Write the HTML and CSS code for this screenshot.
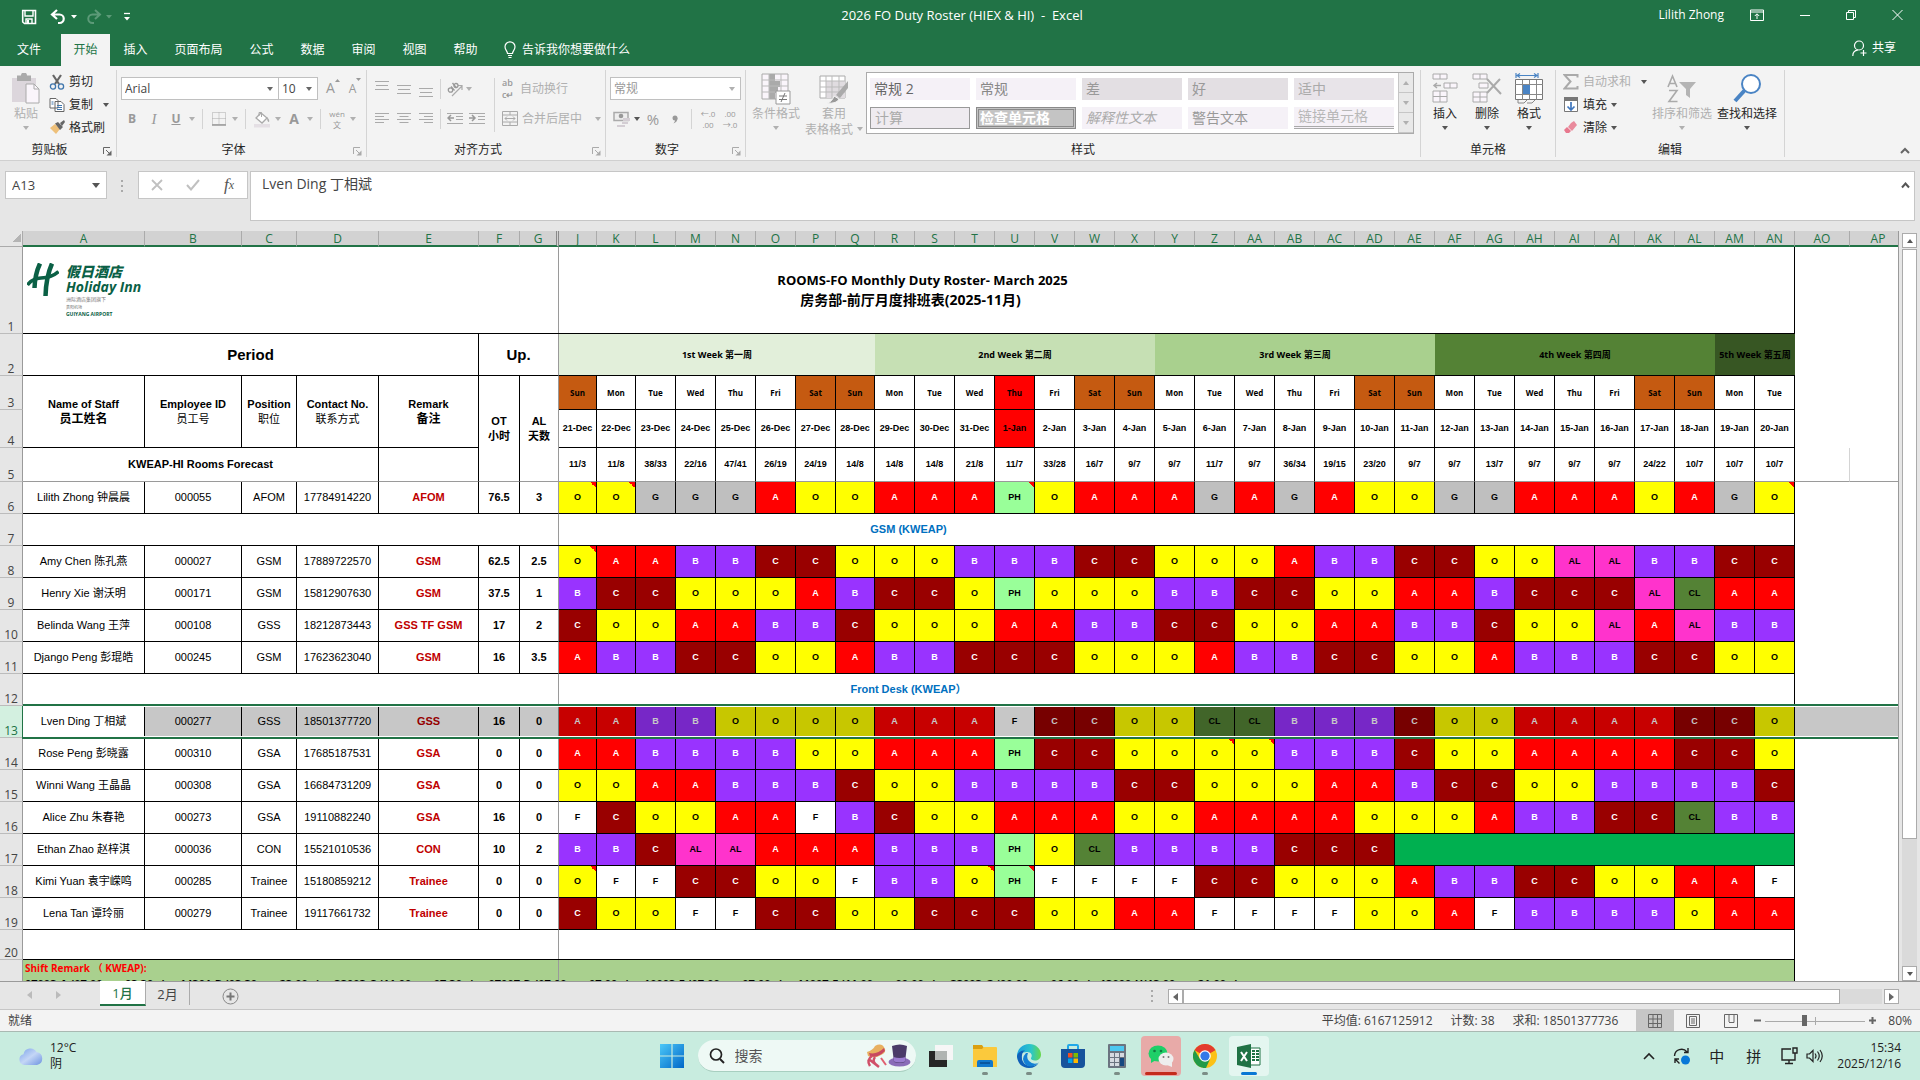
FILE: index.html
```html
<!DOCTYPE html>
<html lang="zh-CN">
<head>
<meta charset="utf-8">
<title>2026 FO Duty Roster (HIEX &amp; HI) - Excel</title>
<link rel="stylesheet" href="styles.css">
</head>
<body>
<header class="titlebar">
  <div class="quick">
    <button class="tb" aria-label="保存"><svg width="16" height="16" viewBox="0 0 16 16"><path d="M1.700 1.500H14.500V14.500H3.500L1.700 13z" fill="none" stroke="#fff" stroke-width="1.600"/><path d="M4 2v5h8V2M5 14v-4h6v4" fill="none" stroke="#fff" stroke-width="1.400"/><path d="M6 11h2v3H6z" fill="#fff"/></svg></button>
    <button class="tb" aria-label="撤消"><svg width="27" height="16" viewBox="0 0 27 16"><path d="M7 1L2 5.500 7 10M3 5.500h6.500a4 4 0 0 1 0 8.500H8" fill="none" stroke="#fff" stroke-width="2.200"/><path d="M21 6h6l-3 3.500z" fill="#fff"/></svg></button>
    <button class="tb" aria-label="恢复"><svg width="27" height="16" viewBox="0 0 27 16"><path d="M10 1l5 4.500L10 10M14 5.500H7.500a4 4 0 0 0 0 8.500H9" fill="none" stroke="#5c9a78" stroke-width="2"/><path d="M21 6h6l-3 3.500z" fill="#5c9a78"/></svg></button>
    <button class="tb" aria-label="自定义快速访问工具栏"><svg width="8" height="10" viewBox="0 0 8 10"><path d="M1 1.500h6" stroke="#fff" stroke-width="1.300"/><path d="M1 5h6L4 8.500z" fill="#fff"/></svg></button>
  </div>
  <h1 class="doc-title">2026 FO Duty Roster (HIEX &amp; HI)&nbsp; -&nbsp; Excel</h1>
  <div class="window-tools">
    <span>Lilith Zhong</span>
    <button class="tb" aria-label="功能区显示选项"><svg width="14" height="12" viewBox="0 0 14 12"><path d="M.5 1H13.500V11.500H.5zM.5 3H13.500M7 10V5M4.800 7L7 4.800 9.200 7" fill="none" stroke="#fff"/></svg></button>
    <button class="tb" aria-label="最小化"><svg width="10" height="12" viewBox="0 0 10 12"><path d="M0 6.500h10" stroke="#fff"/></svg></button>
    <button class="tb" aria-label="还原"><svg width="10" height="12" viewBox="0 0 10 12"><path d="M.5 3.500h7v7h-7zM2.500 3.500v-2h7v7h-2" fill="none" stroke="#fff"/></svg></button>
    <button class="tb" aria-label="关闭"><svg width="11" height="12" viewBox="0 0 11 12"><path d="M.5 1l10 10M10.500 1l-10 10" stroke="#fff"/></svg></button>
  </div>
</header>
<nav class="tabs">
  <button class="tab file">文件</button><button class="tab active">开始</button><button class="tab">插入</button><button class="tab wide">页面布局</button><button class="tab">公式</button><button class="tab">数据</button><button class="tab">审阅</button><button class="tab">视图</button><button class="tab">帮助</button>
  <button class="tell"><svg width="12" height="18" viewBox="0 0 12 18"><path d="M3.500 12.500C3.500 10 1 9 1 5.800a5 5 0 0 1 10 0C11 9 8.500 10 8.500 12.500zM4 14.500h4M4.500 16.500h3" fill="none" stroke="#fff" stroke-width="1.200"/></svg>告诉我你想要做什么</button>
  <button class="share"><svg width="16" height="17" viewBox="0 0 16 17"><circle cx="7" cy="5.500" r="4.500" fill="none" stroke="#fff" stroke-width="1.200"/><path d="M.8 16c0-3 2-5.500 5-5.800M11.500 10v6M8.500 13h6" fill="none" stroke="#fff" stroke-width="1.200"/></svg>共享</button>
</nav>

<section class="ribbon" aria-label="功能区">
  <div class="group clip">
    <div class="body">
      <button class="big off"><svg width="30" height="32" viewBox="0 0 30 32"><path d="M1 5h24v24H1z" fill="#dcd6dc"/><path d="M6 2.500h4a3 3 0 0 1 6 0h4V8H6z" fill="#aaa"/><path d="M15 11h8l5 5v14H15z" fill="#faf5fb" stroke="#aaa"/><path d="M23 11v5h5" fill="none" stroke="#aaa"/></svg><span>粘贴</span><i class="caret"></i></button>
      <div class="stack">
        <button class="line"><svg width="16" height="16" viewBox="0 0 16 16"><path d="M4 1l6 9M12 1L6 10" stroke="#666" stroke-width="2.200"/><circle cx="4" cy="12.500" r="2.600" fill="none" stroke="#3f76ad" stroke-width="1.300"/><circle cx="12" cy="12.500" r="2.600" fill="none" stroke="#3f76ad" stroke-width="1.300"/></svg>剪切</button>
        <button class="line"><svg width="16" height="16" viewBox="0 0 16 16"><path d="M1 1.500h6l2 2V11H1zM6 4.500h6l3 3v7H6z" fill="#fff" stroke="#666"/><path d="M2.500 5h2M2.500 7h2M8 8.500h5M8 10.500h5M8 12.500h5" stroke="#3f76ad"/></svg>复制<i class="caret dark gap"></i></button>
        <button class="line"><svg width="16" height="16" viewBox="0 0 16 16"><path d="M6 4l5 5-4 5-6-6z" fill="#eec07a"/><path d="M6 3.500L9 2l5 5-3 3zM11 3l4-3 1 2-3 4z" fill="#666"/></svg>格式刷</button>
      </div>
    </div>
    <div class="caption"><span>剪贴板</span><svg class="launch on" width="9" height="9" viewBox="0 0 9 9"><path d="M.5 7V.5H7M3 3l4 4" fill="none" stroke="#666"/><path d="M8.500 3.500v5h-5z" fill="#666"/></svg></div>
  </div>

  <div class="group font">
    <div class="body col">
      <div class="tools"><span class="select w-font"><select aria-label="字体"><option>Arial</option></select></span><span class="select w-size"><select aria-label="字号"><option>10</option></select></span>
        <button class="ic grow-a" aria-label="增大字号">A<svg width="5" height="4" viewBox="0 0 5 4"><path d="M0 4l2.500-3L5 4z" fill="#999"/></svg></button><button class="ic shrink-a" aria-label="减小字号">A<svg width="5" height="4" viewBox="0 0 5 4"><path d="M0 0l2.500 3L5 0z" fill="#999"/></svg></button></div>
      <div class="tools low">
        <button class="ic b">B</button><button class="ic i">I</button><button class="ic u">U</button><i class="caret"></i><i class="vr"></i>
        <button class="ic" aria-label="边框"><svg width="14" height="14" viewBox="0 0 14 14"><path d="M.5.5h13v12H.5zM7 .5v12M.5 6.500h13" fill="none" stroke="#aaa" stroke-dasharray="1 1"/><path d="M0 13h14" stroke="#999" stroke-width="1.500"/></svg></button><i class="caret"></i><i class="vr"></i>
        <button class="ic" aria-label="填充颜色"><svg width="16" height="17" viewBox="0 0 16 17"><path d="M7 2l6 5-5 5-6-5z" fill="#fff" stroke="#aaa" stroke-width="1.300"/><path d="M5 5V1.500h2.500V6" fill="none" stroke="#aaa"/><path d="M13 6q3 3 2 5-2 0-2-5z" fill="#aaa"/><path d="M0 13h16v3.500H0z" fill="#e4dfe4"/></svg></button><i class="caret"></i>
        <button class="ic a">A</button><i class="caret"></i><i class="vr"></i>
        <button class="ic wen"><span>wén</span><span>文</span></button><i class="caret"></i>
      </div>
    </div>
    <div class="caption"><span>字体</span><svg class="launch" width="9" height="9" viewBox="0 0 9 9"><path d="M.5 7V.5H7M3 3l4 4" fill="none" stroke="#aaa"/><path d="M8.500 3.500v5h-5z" fill="#aaa"/></svg></div>
  </div>

  <div class="group align">
    <div class="body">
      <div class="col">
        <div class="tools">
          <button class="ic" aria-label="顶端对齐"><svg width="14" height="16" viewBox="0 0 14 16"><path d="M0 .5h14M1 4.500h12M0 8.500h14" stroke="#aaa"/></svg></button>
          <button class="ic" aria-label="垂直居中"><svg width="14" height="16" viewBox="0 0 14 16"><path d="M0 4.500h14M1 8.500h12M0 12.500h14" stroke="#aaa"/></svg></button>
          <button class="ic" aria-label="底端对齐"><svg width="14" height="16" viewBox="0 0 14 16"><path d="M0 7.500h14M1 11.500h12M0 15.500h14" stroke="#aaa"/></svg></button><i class="vr"></i>
          <button class="ic orient" aria-label="方向"><svg width="17" height="16" viewBox="0 0 17 16"><path d="M5 15L15 5M15 9V4.500H11" fill="none" stroke="#aaa" stroke-width="1.200"/><circle cx="3.500" cy="9" r="2.200" fill="none" stroke="#999" stroke-width="1.300"/><path d="M4 5.500L7.500 9.500M5.500 2L9.500 7" stroke="#999" stroke-width="1.300"/><circle cx="9" cy="4.500" r="2" fill="none" stroke="#999" stroke-width="1.300"/></svg></button><i class="caret"></i>
        </div>
        <div class="tools low">
          <button class="ic" aria-label="左对齐"><svg width="14" height="14" viewBox="0 0 14 14"><path d="M0 1.500h14M0 4.500h9M0 7.500h14M0 10.500h9" stroke="#aaa"/></svg></button>
          <button class="ic" aria-label="居中"><svg width="14" height="14" viewBox="0 0 14 14"><path d="M0 1.500h14M2.500 4.500h9M0 7.500h14M2.500 10.500h9" stroke="#aaa"/></svg></button>
          <button class="ic" aria-label="右对齐"><svg width="14" height="14" viewBox="0 0 14 14"><path d="M0 1.500h14M5 4.500h9M0 7.500h14M5 10.500h9" stroke="#aaa"/></svg></button><i class="vr"></i>
          <button class="ic" aria-label="减少缩进量"><svg width="16" height="14" viewBox="0 0 16 14"><path d="M0 1.500h16M9 4.500h7M9 7.500h7M0 11.500h16" stroke="#aaa"/><path d="M7 6H1M4 3L1 6l3 3" fill="none" stroke="#999" stroke-width="1.500"/></svg></button>
          <button class="ic" aria-label="增加缩进量"><svg width="16" height="14" viewBox="0 0 16 14"><path d="M0 1.500h16M9 4.500h7M9 7.500h7M0 11.500h16" stroke="#aaa"/><path d="M0 6h6M3 3l3 3-3 3" fill="none" stroke="#999" stroke-width="1.500"/></svg></button>
        </div>
      </div>
      <i class="vr tall"></i>
      <div class="stack wraps">
        <button class="line off"><span class="abc"><span>ab</span><span>c↵</span></span>自动换行</button>
        <button class="line off"><svg width="16" height="16" viewBox="0 0 16 16"><path d="M.5.5h15v14H.5zM.5 4h15M.5 11h15M8 0v4M8 11v4M3 7.500h10M5 5.500l-2 2 2 2M11 5.500l2 2-2 2" fill="none" stroke="#aaa"/></svg>合并后居中<i class="caret gap"></i></button>
      </div>
    </div>
    <div class="caption"><span>对齐方式</span><svg class="launch" width="9" height="9" viewBox="0 0 9 9"><path d="M.5 7V.5H7M3 3l4 4" fill="none" stroke="#aaa"/><path d="M8.500 3.500v5h-5z" fill="#aaa"/></svg></div>
  </div>

  <div class="group number">
    <div class="body col">
      <div class="tools"><span class="select w-num"><select aria-label="数字格式"><option>常规</option></select></span></div>
      <div class="tools low">
        <button class="ic" aria-label="会计数字格式"><svg width="17" height="17" viewBox="0 0 17 17"><path d="M1 1.500h14v8H1z" fill="#eee" stroke="#aaa" stroke-width="1.500"/><circle cx="8" cy="5" r="2.300" fill="#999"/><path d="M10 7h7v3h-7zM9 11h6v2H9zM4 14h8v2H4z" fill="#d4ced4"/></svg></button><i class="caret dark"></i>
        <button class="ic pct">%</button><button class="ic comma" aria-label="千位分隔样式"><svg width="6" height="9" viewBox="0 0 6 9"><circle cx="3" cy="3" r="2.500" fill="#999"/><path d="M5.500 3q0 4-4 5.500 2-2.500 1.500-4z" fill="#999"/></svg></button><i class="vr"></i>
        <button class="ic dec"><span>←.0</span><span>.00</span></button><button class="ic dec"><span>.00</span><span>→.0</span></button>
      </div>
    </div>
    <div class="caption"><span>数字</span><svg class="launch" width="9" height="9" viewBox="0 0 9 9"><path d="M.5 7V.5H7M3 3l4 4" fill="none" stroke="#aaa"/><path d="M8.500 3.500v5h-5z" fill="#aaa"/></svg></div>
  </div>

  <div class="group styles">
    <div class="body">
      <button class="big off"><svg width="30" height="32" viewBox="0 0 30 32"><path d="M1 1h26v25H1z" fill="#faf5fb" stroke="#aaa"/><path d="M8 1h6v25H8zM14 8h5v6h-5zM14 14h3v6h-3z" fill="#aaa"/><path d="M1 7h26M1 13h26M1 19h26M8 1v25M20 1v25" stroke="#bbb"/><path d="M15 18h14v13H15z" fill="#fff" stroke="#999"/><path d="M18 23h8M18 26.500h8M24 20l-4 9" stroke="#777"/></svg><span>条件格式</span><i class="caret"></i></button>
      <button class="big off tbl"><svg width="30" height="32" viewBox="0 0 30 32"><path d="M1 3h25v22H1z" fill="#fff" stroke="#aaa"/><path d="M7 8h19v17H7z" fill="#e0dce0"/><path d="M1 8h25M1 14h25M1 19h25M7 3v22M13 3v22M20 3v22" stroke="#bbb"/><path d="M29 8v7l-8 10-4-3z" fill="#aaa"/><path d="M8 30q5-1 7-7l5 3q-2 5-12 4z" fill="#999" stroke="#f3f3f3"/></svg><span>套用</span><span>表格格式<i class="caret side"></i></span></button>
      <div class="gallery">
        <div class="swatches">
          <button class="sw">常规 2</button><button class="sw mid">常规</button><button class="sw bad">差</button><button class="sw bad">好</button><button class="sw neutral">适中</button>
          <button class="sw calc">计算</button><button class="sw check">检查单元格</button><button class="sw expl">解释性文本</button><button class="sw warn">警告文本</button><button class="sw link">链接单元格</button>
        </div>
        <div class="gscroll"><button aria-label="上一行"><i class="caret up"></i></button><button aria-label="下一行"><i class="caret"></i></button><button aria-label="其他"><i class="caret"></i></button></div>
      </div>
    </div>
    <div class="caption"><span>样式</span></div>
  </div>

  <div class="group cells">
    <div class="body">
      <button class="big"><svg width="30" height="32" viewBox="0 0 30 32"><path d="M3 1h14v5H3zM10 1v5M3 18h14v11H3zM10 18v11M3 23.500h14M14 10h13v5H14zM20 10v5" fill="#faf5fb" stroke="#aaa"/><path d="M11 12.500H4M7 10l-3 2.500L7 15" fill="none" stroke="#aaa" stroke-width="1.500"/></svg><span>插入</span><i class="caret dark"></i></button>
      <button class="big"><svg width="30" height="32" viewBox="0 0 30 32"><path d="M1 1h14v5H1zM8 1v5M7 10h9v5H7zM1 19h14v10H1zM8 19v10M1 24h14" fill="#faf5fb" stroke="#aaa"/><path d="M15 6l14 15M28 6L15 20" stroke="#aaa" stroke-width="2"/></svg><span>删除</span><i class="caret dark"></i></button>
      <button class="big"><svg width="30" height="32" viewBox="0 0 30 32"><path d="M2 0v5M24 0v5M3 2.500h20M6 .5l-3 2 3 2M20 .5l3 2-3 2" fill="none" stroke="#4a84c4" stroke-width="1.200"/><path d="M1.500 6.500h27v20h-27z" fill="#fff" stroke="#777"/><path d="M1 11.500h28M1 21.500h28M8.500 7v20M22.500 7v20M15.500 7v4M15.500 22v5M4 27v3h6l3-3M13 30h5l3-3" fill="none" stroke="#888"/><path d="M9 12h7v9H9z" fill="#4a84c4"/></svg><span>格式</span><i class="caret dark"></i></button>
    </div>
    <div class="caption"><span>单元格</span></div>
  </div>

  <div class="group edit">
    <div class="body">
      <div class="stack">
        <button class="line off"><svg width="16" height="16" viewBox="0 0 16 16"><path d="M14.500 3.500V1H1.500l6 6.500-6 7h13V12" fill="none" stroke="#aaa" stroke-width="2"/></svg>自动求和<i class="caret dark gap"></i></button>
        <button class="line"><svg width="16" height="16" viewBox="0 0 16 16"><path d="M1.500 1.500h13v13h-13z" fill="#fff" stroke="#777"/><path d="M1 0h14v4H1z" fill="#777"/><path d="M8 5v8M4.500 9.500L8 13l3.500-3.500" fill="none" stroke="#3f76bd" stroke-width="1.700"/></svg>填充<i class="caret dark"></i></button>
        <button class="line"><svg width="16" height="16" viewBox="0 0 16 16"><path d="M8 3l3-2 3 4-5 6-4-4z" fill="#e98a9c"/><path d="M4 7l4 4-2 2H3L1 10z" fill="#e8788e"/></svg>清除<i class="caret dark"></i></button>
      </div>
      <button class="big off sort"><svg width="30" height="32" viewBox="0 0 30 32"><path d="M1 14L5.500 3 10 14M2.800 10.500h5.400M2 17.500h8L2 28.500h8.500" fill="none" stroke="#aaa" stroke-width="1.600"/><path d="M12 9h17l-6 7v9l-4-3v-6z" fill="#b4b4b4"/></svg><span>排序和筛选</span><i class="caret"></i></button>
      <button class="big find"><svg width="30" height="32" viewBox="0 0 30 32"><circle cx="19" cy="11" r="9" fill="#fff" stroke="#4a84c4" stroke-width="2"/><path d="M12.500 17.500L3 28" stroke="#4a84c4" stroke-width="4"/></svg><span>查找和选择</span><i class="caret dark"></i></button>
    </div>
    <div class="caption"><span>编辑</span></div>
  </div>
  <div class="ribbon-end"><button class="collapse" aria-label="折叠功能区"><svg width="10" height="7" viewBox="0 0 10 7"><path d="M1 6l4-4 4 4" fill="none" stroke="#666" stroke-width="2"/></svg></button></div>
</section>

<section class="formula-row">
  <div class="namebox"><input value="A13" aria-label="名称框"><i class="caret dark"></i></div>
  <svg class="grip" width="3" height="12" viewBox="0 0 3 12"><path d="M0 0h2v2H0zM0 5h2v2H0zM0 10h2v2H0z" fill="#aaa"/></svg>
  <div class="fx">
    <button aria-label="取消"><svg width="12" height="12" viewBox="0 0 12 12"><path d="M1 1l10 10M11 1L1 11" stroke="#c0c0c0" stroke-width="1.800"/></svg></button>
    <button aria-label="输入"><svg width="14" height="12" viewBox="0 0 14 12"><path d="M1 6l4 4.500L13 1" fill="none" stroke="#c0c0c0" stroke-width="2"/></svg></button>
    <button class="fn"><em>f</em>x</button>
  </div>
  <div class="formula"><textarea aria-label="编辑栏">Lven Ding 丁相斌</textarea><svg width="9" height="7" viewBox="0 0 9 7"><path d="M1 5.500l3.500-4L8 5.500" fill="none" stroke="#555" stroke-width="2"/></svg></div>
</section>

<main class="workspace">
  <div class="sheet"><table class="grid" id="grid"></table></div>
  <div class="vscroll"><button aria-label="向上滚动"><i class="caret dark up"></i></button><div class="vthumb"></div><div class="vtrack"></div><button aria-label="向下滚动"><i class="caret dark"></i></button></div>
</main>

<section class="sheetbar">
  <div class="arrows"><svg width="5" height="8" viewBox="0 0 5 8"><path d="M5 0v8L0 4z" fill="#bbb"/></svg><svg width="5" height="8" viewBox="0 0 5 8"><path d="M0 0v8l5-4z" fill="#bbb"/></svg></div>
  <button class="stab current">1月</button><button class="stab">2月</button>
  <button class="addsheet" aria-label="新工作表"><svg width="17" height="17" viewBox="0 0 17 17"><circle cx="8.500" cy="8.500" r="7.500" fill="none" stroke="#888"/><path d="M8.500 4.500v8M4.500 8.500h8" stroke="#777" stroke-width="2"/></svg></button>
  <svg class="grip2" width="3" height="12" viewBox="0 0 3 12"><path d="M0 0h2v2H0zM0 5h2v2H0zM0 10h2v2H0z" fill="#aaa"/></svg>
  <div class="hscroll"><button aria-label="向左滚动"><svg width="5" height="8" viewBox="0 0 5 8"><path d="M5 0v8L0 4z" fill="#666"/></svg></button><div class="hthumb"></div><div class="htrack"></div><button aria-label="向右滚动"><svg width="5" height="8" viewBox="0 0 5 8"><path d="M0 0v8l5-4z" fill="#666"/></svg></button></div>
</section>

<section class="status">
  <span class="ready">就绪</span>
  <span>平均值: 6167125912</span><span>计数: 38</span><span>求和: 18501377736</span>
  <div class="views">
    <button class="on" aria-label="普通"><svg width="14" height="14" viewBox="0 0 14 14"><path d="M.5.500h13v13H.5zM5 0v14M9.500 0v14M0 5h14M0 9.500h14" fill="none" stroke="#666"/></svg></button>
    <button aria-label="页面布局"><svg width="14" height="14" viewBox="0 0 14 14"><path d="M.5.500h13v13H.5zM3.500 2.500h7v9h-7zM5 5h4M5 7h4M5 9h4" fill="none" stroke="#666"/></svg></button>
    <button aria-label="分页预览"><svg width="14" height="14" viewBox="0 0 14 14"><path d="M.5.500h13v13H.5zM5 0v8M5 8.500h5V0" fill="none" stroke="#666"/></svg></button>
  </div>
  <div class="zoomer"><button class="zoom-btn" aria-label="缩小"><svg width="7" height="7" viewBox="0 0 7 7"><path d="M0 3.500h7" stroke="#666" stroke-width="2"/></svg></button><input type="range" class="zoom" min="0" max="100" value="39" aria-label="缩放"><button class="zoom-btn" aria-label="放大"><svg width="7" height="7" viewBox="0 0 7 7"><path d="M0 3.500h7M3.500 0v7" stroke="#666" stroke-width="2"/></svg></button></div>
  <span class="pct80">80%</span>
</section>

<footer class="taskbar">
  <button class="weather"><svg width="24" height="18" viewBox="0 0 24 18"><defs><linearGradient id="cl" x1="0" y1="0" x2="1" y2="1"><stop offset="0" stop-color="#7ba3ea"/><stop offset=".5" stop-color="#c4d6f6"/><stop offset="1" stop-color="#6d93e0"/></linearGradient></defs><path d="M5.500 18a5.500 5.500 0 0 1-1-10.800A7 7 0 0 1 17.500 5 6.600 6.600 0 0 1 18 18z" fill="url(#cl)"/></svg><span class="wtext"><span>12°C</span><span>阴</span></span></button>
  <div class="apps">
    <button class="app start" aria-label="开始菜单"><svg width="24" height="24" viewBox="0 0 24 24"><defs><linearGradient id="wn" x1="0" y1="0" x2="1" y2="1"><stop offset="0" stop-color="#4cc8f8"/><stop offset="1" stop-color="#0067c8"/></linearGradient></defs><path d="M0 0h11.400v11.400H0zM12.600 0H24v11.400H12.600zM0 12.600h11.400V24H0zM12.600 12.600H24V24H12.600z" fill="url(#wn)"/></svg></button>
    <label class="search"><svg width="16" height="16" viewBox="0 0 16 16"><circle cx="7" cy="6.500" r="5.500" fill="none" stroke="#222" stroke-width="1.700"/><path d="M11 11l4 4" stroke="#222" stroke-width="1.900"/></svg><input placeholder="搜索" aria-label="搜索"><svg width="46" height="24" viewBox="0 0 46 24"><path d="M2 8Q8 6 10 2q7-4 10 3 1 4-4 6-6 4-13 1z" fill="#e8b060"/><path d="M4 9q8 2 15-5l1 3Q12 15 5 12z" fill="#c84860"/><path d="M7 12q-6 4-2 10M10 13q-4 5 3 9M5 16l9 7" fill="none" stroke="#d05068" stroke-width="2.500"/><path d="M16 14l5 7" stroke="#e06070" stroke-width="2"/><ellipse cx="34.500" cy="18" rx="11" ry="4.500" fill="#8a6cb8"/><path d="M27 2q8-3 15 0l-2 16q-5 2-11 0z" fill="#4a3b68"/><path d="M28.500 13q6 2 12 0l-.5 4.500q-5 2-11 0z" fill="#9b7cd0"/></svg></label>
    <button class="app" aria-label="任务视图"><svg width="26" height="24" viewBox="0 0 26 24"><path d="M1 7h18v16H1z" fill="#262626"/><path d="M7 1h18v15H7z" fill="#f6f6f6"/><path d="M7 7h12v9H7z" fill="#b0b4b2"/></svg></button>
    <button class="app run" aria-label="文件资源管理器"><svg width="26" height="24" viewBox="0 0 26 24"><path d="M1 1h9l2 3v5H1z" fill="#dba010"/><path d="M1 5h9l2-2h12q1 0 1 1v19H1z" fill="#fbc93c"/><path d="M5 23v-5q0-2 2-2h12q2 0 2 2v5z" fill="#1178cc"/><path d="M8 19h10" stroke="#064d90" stroke-width="1.500"/></svg></button>
    <button class="app run" aria-label="Edge"><svg width="24" height="24" viewBox="0 0 24 24"><defs><linearGradient id="eg"><stop offset="0" stop-color="#1a9ee0"/><stop offset=".6" stop-color="#2cc6c8"/><stop offset="1" stop-color="#68d848"/></linearGradient></defs><path d="M0 12A12 12 0 0 1 12 0c7 0 12 5 12 10.500 0 4-3 6-6 6-2.500 0-4.500-1-4-2.500 2-3 0-6-4-6-5 0-9 3-10 8z" fill="url(#eg)"/><path d="M0 12q2-6 8-5.500-4 2-3 9 2 7 10 6.500 4 0 7-4-3 6-10 6Q1 23.500 0 12z" fill="#0f5fb8"/><path d="M9 9q-6 6 0 12 6 4 12-2-5 2-9-2-3-3-1-8z" fill="#1580d4"/></svg></button>
    <button class="app" aria-label="应用商店"><svg width="24" height="24" viewBox="0 0 24 24"><path d="M7 7V2q0-1 1-1h8q1 0 1 1v5" fill="none" stroke="#22a8e8" stroke-width="2"/><path d="M0 5h24v15q0 4-4 4H4q-4 0-4-4z" fill="#17539c"/><path d="M7 9h4.500v4.500H7z" fill="#f25022"/><path d="M12.500 9H17v4.500h-4.500z" fill="#7fba00"/><path d="M7 14.500h4.500V19H7z" fill="#00a4ef"/><path d="M12.500 14.500H17V19h-4.500z" fill="#ffb900"/></svg></button>
    <button class="app run" aria-label="计算器"><svg width="20" height="24" viewBox="0 0 20 24"><rect x="1" width="18" height="24" rx="1" fill="#6b7480"/><path d="M3 2h14v5H3z" fill="#4cc8f0"/><path d="M3 9h4v4H3zM8 9h4v4H8zM13 9h4v4h-4zM3 14h4v4H3zM8 14h4v4H8zM3 19h4v3H3zM8 19h4v3H8z" fill="#d5dae0"/><path d="M13 14h4v8h-4z" fill="#164880"/></svg></button>
    <button class="app alert" aria-label="微信"><svg width="26" height="24" viewBox="0 0 26 24"><ellipse cx="10" cy="9.500" rx="9.500" ry="8" fill="#1fcf68"/><path d="M3 14l0 5 5-3z" fill="#1fcf68"/><circle cx="6.500" cy="7" r="1.300" fill="#117a40"/><circle cx="13" cy="7" r="1.300" fill="#117a40"/><ellipse cx="18" cy="15" rx="7.500" ry="6.500" fill="#eee"/><path d="M24 18v5l-5-2z" fill="#eee"/><circle cx="15.500" cy="13" r="1" fill="#777"/><circle cx="20.500" cy="13" r="1" fill="#777"/></svg></button>
    <button class="app run" aria-label="Chrome"><svg width="24" height="24" viewBox="0 0 24 24"><circle cx="12" cy="12" r="12" fill="#fbc116"/><path d="M12 12L1.600 6A12 12 0 0 1 22.400 6z" fill="#e33b2e"/><path d="M12 6h10.400L12 12 1.600 6z" fill="#e33b2e"/><path d="M1.600 6L7 15l5-3v12A12 12 0 0 1 1.600 6z" fill="#229a48"/><path d="M7 14l5 4-2 6h3l4-9z" fill="#229a48"/><circle cx="12" cy="12" r="5.800" fill="#fff"/><circle cx="12" cy="12" r="4.600" fill="#3478e8"/></svg></button>
    <button class="app current" aria-label="Excel"><svg width="24" height="24" viewBox="0 0 24 24"><path d="M12 4h11v17H12z" fill="#fff" stroke="#207245"/><path d="M15 7h3M19 7h3M15 10h3M19 10h3M15 13h3M19 13h3M15 16h3M19 16h3" stroke="#207245" stroke-width="1.800"/><path d="M0 3l14-3v24L0 21z" fill="#207245"/><path d="M4 8l6 9M10 8l-6 9" stroke="#fff" stroke-width="2"/></svg></button>
  </div>
  <div class="tray">
    <svg width="12" height="8" viewBox="0 0 12 8"><path d="M1 7l5-5 5 5" fill="none" stroke="#222" stroke-width="1.600"/></svg>
    <svg width="18" height="18" viewBox="0 0 18 18"><path d="M1.500 9A7 7 0 0 1 14 5M15 1v4.500h-4M2 16v-4h4M2.500 12.500l4 4" fill="none" stroke="#222" stroke-width="1.400"/><circle cx="12.500" cy="13" r="4.500" fill="#0878d8"/></svg>
    <span>中</span><span class="ime">拼</span>
    <svg width="17" height="18" viewBox="0 0 17 18"><path d="M10 2H1v11h13V9M4 16.500h8M8 13v3M12 1h4v5h-4zM14 6v4" fill="none" stroke="#222" stroke-width="1.400"/></svg>
    <svg width="17" height="16" viewBox="0 0 17 16"><path d="M1 6h2.500L7 2.500v11L3.500 10H1zM9 5.500q2 2.500 0 5M11.500 3.500q3.500 4.500 0 9M14 2q4.500 6 0 12" fill="none" stroke="#222" stroke-width="1.200"/></svg>
    <div class="clock"><span>15:34</span><span>2025/12/16</span></div>
  </div>
</footer>
<script src="roster.js"></script>
</body>
</html>
```
FILE: styles.css
```css
* { box-sizing: border-box; }
body {
  margin: 0; height: 100vh; display: flex; flex-direction: column; overflow: hidden;
  font: 12px/16px "Open Sans", "Noto Sans CJK SC", sans-serif; color: #262626; background: #e6e6e6;
}
button, input, select, textarea { font: inherit; color: inherit; background: none; border: 0; padding: 0; margin: 0; border-radius: 0; outline: 0; }
button { display: flex; align-items: center; justify-content: center; white-space: nowrap; }
svg { display: block; flex: none; }
.caret { width: 0; height: 0; flex: none; border: 3px solid transparent; border-top: 4px solid #b0b0b0; border-bottom: 0; }
.caret.dark { border-top-color: #555; }
.caret.up { border-top: 0; border-bottom: 4px solid #b0b0b0; }
.caret.dark.up { border-bottom-color: #555; }
.col { display: flex; flex-direction: column; }

/* title bar */
.titlebar { flex: none; height: 34px; display: grid; grid-template-columns: 1fr auto 1fr; align-items: center; padding: 0 17px 4px 21px; background: #217346; color: #fff; }
.quick { display: flex; align-items: center; gap: 13px; padding-top: 4px; }
.quick .tb:last-child { margin-left: -2px; }
.quick .tb:nth-child(3) { margin-left: -5px; }
.doc-title { margin: 0; font-size: 13px; font-weight: 400; }
.window-tools { display: flex; justify-content: flex-end; align-items: center; gap: 36px; }
.window-tools span { margin-right: -10px; }

/* ribbon tabs */
.tabs { flex: none; height: 32px; display: flex; background: #217346; color: #fff; padding-right: 24px; }
.tab { width: 51px; }
.tab.file { width: 61px; padding-right: 3px; }
.tab.wide { width: 75px; }
.tab.active { width: 49px; background: #f3f3f3; color: #217346; }
.tell { gap: 6px; margin-left: 13px; }
.share { gap: 4px; margin-left: auto; padding-bottom: 4px; }

/* ribbon */
.ribbon { flex: none; height: 95px; display: flex; background: #f3f3f3; border-bottom: 1px solid #d0d0d0; padding-top: 4px; }
.group { height: 87px; display: flex; flex-direction: column; border-right: 1px solid #d4d4d4; }
.body { height: 72px; display: flex; padding-top: 3px; }
.body.col { padding-top: 7px; }
.caption { height: 15px; display: flex; align-items: center; position: relative; }
.caption span { flex: 1; text-align: center; }
.launch { position: absolute; right: 4px; bottom: 1px; }
.clip { width: 117px; } .clip .caption { padding-right: 17px; }
.font { width: 250px; } .font .caption { padding-right: 16px; }
.align { width: 239px; } .align .caption { padding-right: 16px; }
.number { width: 140px; } .number .caption { padding-right: 17px; }
.styles { flex: 1; }
.cells { width: 135px; }
.edit { width: 229px; }
.ribbon-end { width: 135px; display: flex; }
.big { flex-direction: column; justify-content: flex-start; min-width: 42px; line-height: 16px; }
.big svg { margin-bottom: 1px; }
.big .caret { margin-top: 4px; }
.big .caret.side { display: inline-block; margin: 0 0 3px 4px; }
.off { color: #b0b0b0; }
.clip .big { width: 44px; margin-left: 4px; }
.stack { display: flex; flex-direction: column; }
.line { height: 23px; justify-content: flex-start; gap: 4px; padding-bottom: 5px; }
.caret.gap { margin-left: 6px; }
.clip .stack { margin-left: 1px; }
.tools { display: flex; align-items: center; height: 23px; }
.tools.low { margin-top: 7px; height: 24px; }
.font .tools, .number .tools { padding-left: 4px; }
.select { position: relative; height: 23px; border: 1px solid #c0c0c0; background: #fff; }
.select select { width: 100%; height: 21px; appearance: none; padding-left: 3px; color: #444; }
.select::after { content: ""; position: absolute; right: 5px; top: 9px; border: 3px solid transparent; border-top: 4px solid #666; border-bottom: 0; }
.w-font { width: 158px; }
.w-size { width: 40px; margin-left: -1px; }
.number .w-num { width: 131px; }
.w-num select { color: #999; }
.number .select::after { border-top-color: #b0b0b0; }
.ic { width: 22px; height: 22px; color: #999; }
.grow-a, .shrink-a { align-items: flex-start; }
.grow-a { font-size: 14px; margin-left: 4px; line-height: 20px; }
.shrink-a { font-size: 12px; line-height: 22px; }
.b { font-weight: 700; } .i { font-style: italic; font-family: "Liberation Serif", serif; font-size: 15px; } .u { font-weight: 700; text-decoration: underline; }
.a { font-weight: 700; font-size: 14px; }
.vr { width: 1px; height: 20px; background: #d4d4d4; margin: 0 5px; flex: none; }
.low .caret { margin: 0 2px; }
.wen { flex-direction: column; font-size: 8px; line-height: 11px; }
.align .col { padding: 4px 0 0 4px; }
.align .vr { margin: 0 3px; }
.align .vr.tall { height: 54px; margin: 5px 7px 0 6px; }
.wraps { padding-top: 4px; }
.wraps .line { height: 24px; padding: 0; gap: 4px; margin-bottom: 6px; }
.abc { width: 14px; display: flex; flex-direction: column; text-align: left; font-size: 9px; line-height: 12px; font-weight: 600; color: #999; }
.wraps .caret.gap { margin-left: 9px; }
.pct { font-size: 15px; }
.dec { flex-direction: column; font-size: 8px; line-height: 11px; }
.styles .big { width: 58px; margin-left: 1px; }
.gallery { flex: 1; display: flex; height: 62px; margin: -1px 6px 0 0; border: 1px solid #ababab; background: #fff; }
.styles .tbl { margin: 0 1px 0 -2px; width: 62px; }
.swatches { flex: 1; display: grid; grid-template-columns: repeat(5, 1fr); gap: 6px; padding: 5px 4px 4px 3px; }
.sw { justify-content: flex-start; padding-left: 4px; background: #f5f1f7; color: #666; font-size: 14px; height: 22px; }
.sw.mid { color: #888; } .sw.bad { background: #e3dfe3; color: #999; } .sw.neutral { background: #e8e4e9; color: #aaa; }
.sw.calc { background: #efebf0; border: 1px solid #999; color: #aaa; }
.sw.check { background: #c4c4c4; border: 3px double #8a8a8a; color: #fff; padding-left: 1px; font-weight: 600; }
.sw.expl { font-style: italic; color: #aaa; } .sw.warn { color: #999; }
.sw.link { color: #b8b8b8; border-bottom: 3px double #aaa; }
.gscroll { width: 15px; display: flex; flex-direction: column; border-left: 1px solid #c6c6c6; background: #e9e9e9; }
.gscroll button { flex: 1; border-bottom: 1px solid #c6c6c6; }
.cells .body { padding-left: 3px; }
.edit .body { padding-left: 7px; }
.edit .stack { width: 85px; }
.sort { width: 66px; margin-left: 1px; } .find { width: 64px; }
.collapse { margin: auto 9px 4px auto; width: 12px; height: 12px; }

/* formula row */
.formula-row { flex: none; height: 70px; display: flex; padding: 10px 5px 10px 5px; background: #e6e6e6; }
.namebox { width: 102px; height: 28px; display: flex; align-items: center; background: #fff; border: 1px solid #c6c6c6; padding: 0 6px; }
.namebox input { flex: 1; min-width: 0; font-size: 13px; color: #444; }
.namebox .caret { border-width: 5px 4px 0; }
.grip { margin: 9px 14px 0 14px; }
.fx { width: 110px; height: 28px; display: flex; background: #fff; border: 1px solid #c6c6c6; }
.fx button { flex: 1; }
.fn { font: italic 12px "Liberation Serif", serif; color: #555; } .fn em { font-size: 17px; }
.formula { flex: 1; margin-left: 2px; height: 50px; background: #fff; border: 1px solid #c6c6c6; display: flex; padding: 2px 4px 0 11px; }
.formula textarea { flex: 1; height: 44px; resize: none; font-size: 14px; line-height: 20px; color: #444; overflow: hidden; }
.formula svg { margin-top: 8px; }

/* worksheet */
.workspace { flex: 1; min-height: 0; display: flex; border-bottom: 1px solid #9a9a9a; }
.sheet { flex: 1; min-width: 0; overflow: hidden; background: #fff; border-right: 1px solid #9a9a9a; }
.grid { width: 100%; table-layout: fixed; border-spacing: 0; font: 11px/15px "Liberation Sans", "Noto Sans CJK SC", sans-serif; color: #000; }
.grid td, .grid th { padding: 0; overflow: hidden; white-space: nowrap; text-align: center; vertical-align: middle; }
.grid td { border-right: 1px solid #000; border-bottom: 1px solid #000; }
.grid thead th { height: 16px; font: 12px/13px "Open Sans", sans-serif; color: #217346; background: #d2d2d2; border-right: 1px solid #ababab; border-bottom: 2px solid #217346; }
.grid thead th:last-child { padding-left: 8px; border-right: 0; }
.grid thead th.corner { background: linear-gradient(135deg, transparent 50%, #b4b4b4 50%) 12px 2px / 9px 9px no-repeat #e6e6e6; border-bottom: 1px solid #ababab; }
.grid thead th.frozen { border-right: 3px double #8a8a8a; }
.grid tbody th { background: #e6e6e6; color: #444; font: 12px/12px "Open Sans", sans-serif; vertical-align: bottom; border-right: 1px solid #9a9a9a; border-bottom: 1px solid #bcbcbc; }
.grid td.frozen { border-right-color: #9a9a9a; }
.grid td.out { border: 0; }
.grid td.faint { border-right: 1px solid #d4d4d4; }
.r1 { height: 87px; } .r2 { height: 42px; } .r3, .r5 { height: 34px; } .r4 { height: 38px; } .staff, .band { height: 32px; } .r20 { height: 30px; } .r21 { height: 40px; }
.grid .r5 td, .grid .under5, .grid .r5 td.out { border-bottom: 1px solid #9a9a9a; }
.grid td.across { background: linear-gradient(#9a9a9a, #9a9a9a) 535px 0 / 1px 100% no-repeat; font-weight: 700; }
.grid td.title { position: relative; font: 700 13px/20px "Open Sans", "Noto Sans CJK SC", sans-serif; }
.title p { margin: 0; } .title .en { padding-left: 28px; } .title .cn { font-size: 14px; padding-left: 4px; }
.logo { position: absolute; left: 4px; top: 16px; display: flex; gap: 7px; text-align: left; color: #0a6045; }
.logo-text { display: flex; flex-direction: column; }
.logo-text span { white-space: nowrap; }
.l1 { font: italic 900 14px/16px "Noto Sans CJK SC", sans-serif; }
.l2 { font: italic 700 14px/15px "Open Sans", sans-serif; }
.l3 { font: 5px/10px "Noto Sans CJK SC", sans-serif; color: #777; }
.l4 { font: 4px/7px "Noto Sans CJK SC", sans-serif; color: #777; }
.l5 { font: 700 5px/6px "Open Sans", sans-serif; }
.h15 { font-size: 15px; font-weight: 700; }
.hd { font-weight: 700; } .hd span { display: block; } .hd .thin { font-weight: 400; } .hd .cjk { font-size: 12px; }
.grid td.week { font: 700 9px/14px "Open Sans", "Noto Sans CJK SC", sans-serif; border-right: 0; }
.w1 { background: #e2efda; } .w2 { background: #c6e0b4; } .w3 { background: #a9d08e; } .w4 { background: #548235; } .w5 { background: #375623; }
.grid td.day { font: 700 8px/12px "Open Sans", sans-serif; }
.grid td.date { font-weight: 700; font-size: 9px; }
.weekend { background: #c55a11; } .holiday { background: #f00; }
.remark { color: #c00000; font-weight: 700; }
.bold { font-weight: 700; }
.section { color: #0070c0; }
.code { font-weight: 700; font-size: 9px; }
.A { background-color: #f00; color: #fff; } .B { background-color: #9933ff; color: #fff; } .C { background-color: #990000; color: #fff; }
.O { background-color: #ff0; } .G { background-color: #bfbfbf; } .PH { background-color: #9f9; } .AL { background-color: #f3c; } .CL { background-color: #548235; }
.leave { background: #00b050; }
.note { background-image: linear-gradient(to bottom left, #f00 50%, transparent 50%); background-size: 6px 6px; background-position: right top; background-repeat: no-repeat; }
.grid .selected th { background: #d3f0e0; color: #217346; }
.grid .selected td { position: relative; overflow: visible; }
.selected td::after { content: ""; position: absolute; top: 0; bottom: 0; left: 0; right: -1px; background: rgba(0, 0, 0, .22); background-clip: padding-box; border: solid #fff; border-width: 1px 0; box-shadow: 0 -2px #217346, 0 2px #217346; }
.selected td.active::after { background: none; border-left: 1px solid #fff; box-shadow: 0 -2px #217346, 0 2px #217346, -1px 0 #217346, -1px 2px #217346; }
.selected td.out::after { bottom: 1px; right: 0; }
.grid td.remarks { background: linear-gradient(#9a9a9a, #9a9a9a) 535px 0 / 1px 100% no-repeat #a9d08e; text-align: left; vertical-align: top; font: 700 11px/15px "Open Sans", "Noto Sans CJK SC", sans-serif; padding-left: 2px; }
.remarks p { margin: 0; white-space: pre; } .remarks .red { color: #f00; font-size: 10px; line-height: 16px; }

.vscroll { width: 21px; display: flex; flex-direction: column; padding: 2px 3px 0 3px; }
.vscroll button { height: 15px; border: 1px solid #ababab; background: #fff; }
.vthumb { flex: 590; border: 1px solid #ababab; background: #fff; margin-top: 1px; }
.vtrack { flex: 128; background: #dadada; }

/* sheet tabs */
.sheetbar { flex: none; height: 28px; display: flex; align-items: flex-start; border-bottom: 1px solid #c6c6c6; padding-right: 21px; }
.arrows { width: 100px; display: flex; gap: 24px; padding: 9px 0 0 27px; }
.stab { width: 44px; height: 23px; font-size: 13px; color: #444; border-right: 1px solid #ababab; }
.stab.current { width: 46px; height: 25px; margin-top: -1px; background: #fff; color: #217346; font-weight: 500; border-bottom: 2px solid #217346; }
.addsheet { margin: 6px 0 0 32px; }
.grip2 { margin: 8px 14px 0 auto; }
.hscroll { width: calc(39% - 10px); height: 15px; margin-top: 7px; display: flex; }
.hscroll button { width: 15px; border: 1px solid #ababab; background: #fff; }
.hthumb { flex: 656; border: 1px solid #ababab; background: #fff; }
.htrack { flex: 42; background: #dadada; margin-right: 2px; }

/* status bar */
.status { flex: none; height: 22px; display: flex; align-items: center; gap: 18px; padding: 0 8px; background: #f3f3f3; border-bottom: 1px solid #a9b9b2; color: #444; }
.ready { margin-right: auto; }
.views { display: flex; align-self: stretch; }
.views button { width: 38px; } .views .on { background: #c6c6c6; }
.zoomer { display: flex; align-items: center; gap: 4px; margin: 0 -6px 0 -14px; }
.zoom { appearance: none; width: 100px; height: 16px; background: linear-gradient(#aaa, #aaa) 0 8px / 100% 1px no-repeat, linear-gradient(#aaa, #aaa) 50% 4px / 1px 8px no-repeat; }
.zoom::-webkit-slider-thumb { appearance: none; width: 5px; height: 11px; background: #666; }

/* taskbar */
.taskbar { flex: none; height: 48px; display: grid; grid-template-columns: 1fr auto 1fr; align-items: center; background: #c8ecdf; padding: 0 19px; color: #222; }
.weather { justify-self: start; gap: 7px; text-align: left; }
.wtext, .wtext span, .clock span { display: block; }
.apps { display: flex; align-items: center; height: 48px; padding-left: 2px; }
.app { width: 40px; height: 40px; margin: 0 2px; border-radius: 4px; position: relative; }
.app.start { width: 36px; }
.run::after, .alert::after, .current.app::after { content: ""; position: absolute; bottom: 1px; width: 6px; height: 3px; border-radius: 2px; background: #7b8d86; }
.app.alert { background: #e8aaa8; } .alert::after { width: 32px; background: #c42b1c; }
.app.current { background: #e4f6f0; } .current.app::after { width: 16px; background: #0878d4; }
.search { width: 218px; height: 32px; margin: 0 3px 0 6px; border-radius: 16px; background: #eef9f5; border-bottom: 1px solid #a8cfc0; display: flex; align-items: center; gap: 10px; padding: 0 5px 0 11px; }
.search input { flex: 1; min-width: 0; font-size: 14px; }
.search input::placeholder { color: #555; opacity: 1; }
.tray { justify-self: end; display: flex; align-items: center; font-size: 15px; gap: 18px; }
.tray .ime { margin: 0 2px 0 4px; } .tray span + svg + svg { margin-left: -10px; }
.clock { font-size: 12px; line-height: 16px; text-align: right; margin-left: -4px; }
```
FILE: roster.js
```js
const letters = "A B C D E F G J K L M N O P Q R S T U V W X Y Z AA AB AC AD AE AF AG AH AI AJ AK AL AM AN AO AP".split(" ");
const widths = [23, 122, 97, 55, 82, 100, 41, 39, 38, 39, 40, 40, 40, 40, 40, 39].concat(Array(23).fill(40), [55]);
const days = "Mon Tue Wed Thu Fri Sat Sun".split(" ");
const forecast = "11/3 11/8 38/33 22/16 47/41 26/19 24/19 14/8 14/8 14/8 21/8 11/7 33/28 16/7 9/7 9/7 11/7 9/7 36/34 19/15 23/20 9/7 9/7 13/7 9/7 9/7 9/7 24/22 10/7 10/7 10/7".split(" ");
const out = '<td class="out"></td><td class="out"></td>';

const staff = {
  6: ["Lilith Zhong 钟晨晨", "000055", "AFOM", "17784914220", "AFOM", "76.5", "3", "O* O* G G G A O O A A A PH* O A A A G A G A O O G G A A A O A G O*"],
  8: ["Amy Chen 陈孔燕", "000027", "GSM", "17889722570", "GSM", "62.5", "2.5", "O* A A B B C C O O O B B B C C O O O A B B C C O O AL AL B B C C"],
  9: ["Henry Xie 谢沃明", "000171", "GSM", "15812907630", "GSM", "37.5", "1", "B C C O O O A B C C O PH O O O B B C C O O A A B C C C AL CL A A"],
  10: ["Belinda Wang 王萍", "000108", "GSS", "18212873443", "GSS TF GSM", "17", "2", "C O O A A B B C O O O A A B B C C O O A A B B C O O AL A AL B B"],
  11: ["Django Peng 彭琨皓", "000245", "GSM", "17623623040", "GSM", "16", "3.5", "A B B C C O O A B B C C C O O O A B B C C O O A B B B C C O O"],
  13: ["Lven Ding 丁相斌", "000277", "GSS", "18501377720", "GSS", "16", "0", "A A B B O O O O A A A F C C O O CL CL B B B C O O A A A A C C O"],
  14: ["Rose Peng 彭晓露", "000310", "GSA", "17685187531", "GSA", "0", "0", "A A B B B B O O A A A PH C C O O O* O* B B B C O O A A A A C C O"],
  15: ["Winni Wang 王晶晶", "000308", "GSA", "16684731209", "GSA", "0", "0", "O O A A B B B C O O B B B B C C O O O A A B C C O O B B B B C"],
  16: ["Alice Zhu 朱春艳", "000273", "GSA", "19110882240", "GSA", "16", "0", "F C O O A A F B C O O A A A O O A A A A O O O A B B C C CL B B"],
  17: ["Ethan Zhao 赵梓淇", "000036", "CON", "15521010536", "CON", "10", "2", "B B C AL AL A A A B B B PH O CL B B B B C C C"],
  18: ["Kimi Yuan 袁宇嵘鸣", "000285", "Trainee", "15180859212", "Trainee", "0", "0", "O* F F C C O O F B B O* PH* F F F F C C O O O A B B C C O O A A F"],
  19: ["Lena Tan 谭玲丽", "000279", "Trainee", "19117661732", "Trainee", "0", "0", "C O O F F C C O O C C C O O A A F F F F O O A F B B B B O A A"]
};

function dayClass(i) {
  if (i === 11) return " holiday";
  return i % 7 === 0 || i % 7 === 6 ? " weekend" : "";
}

function staffRow(n) {
  const [name, id, pos, tel, remark, ot, al, shifts] = staff[n];
  const codes = shifts.split(" ").map(s => {
    const c = s.replace("*", "");
    return `<td class="code ${c}${s.endsWith("*") ? " note" : ""}">${c}</td>`;
  });
  if (codes.length < 31) codes.push(`<td class="leave" colspan="${31 - codes.length}"></td>`);
  return `<tr class="staff${n === 13 ? " selected" : ""}"><th>${n}</th><td${n === 13 ? ' class="active"' : ""}>${name}</td><td>${id}</td><td>${pos}</td><td>${tel}</td>` +
    `<td class="remark">${remark}</td><td class="bold">${ot}</td><td class="bold frozen">${al}</td>${codes.join("")}${out}</tr>`;
}

const band = (n, text, cls) => `<tr class="${cls}"><th>${n}</th><td class="across section" colspan="38">${text}</td>${out}</tr>`;

const dayCells = forecast.map((f, i) => `<td class="day${dayClass(i)}">${days[(i + 6) % 7]}</td>`).join("");
const dateCells = forecast.map((f, i) => {
  const d = i < 11 ? `${21 + i}-Dec` : `${i - 10}-Jan`;
  return `<td class="date${i === 11 ? " holiday" : ""}">${d}</td>`;
}).join("");

const logo = `<div class="logo"><svg width="32" height="33" viewBox="0 0 32 33"><path d="M13 .5Q8 11 7.500 25M25 .5Q19 14 18.500 33" fill="none" stroke="#0a6045" stroke-width="4.500"/><path d="M.5 22Q5 15.500 14 15Q25 14.500 31.500 8.500" fill="none" stroke="#0a6045" stroke-width="3.500"/></svg>
<div class="logo-text"><span class="l1">假日酒店</span><span class="l2">Holiday Inn</span><span class="l3">洲际酒店集团旗下</span><span class="l4">贵阳机场</span><span class="l5">GUIYANG AIRPORT</span></div></div>`;

const rows = [
  `<tr class="r1"><th>1</th><td class="across title" colspan="38">${logo}<p class="en">ROOMS-FO Monthly Duty Roster- March 2025</p><p class="cn">房务部-前厅月度排班表(2025-11月)</p></td>${out}</tr>`,
  `<tr class="r2"><th>2</th><td class="h15" colspan="5">Period</td><td class="h15 frozen" colspan="2">Up.</td><td class="week w1" colspan="8">1st Week 第一周</td><td class="week w2" colspan="7">2nd Week 第二周</td><td class="week w3" colspan="7">3rd Week 第三周</td><td class="week w4" colspan="7">4th Week 第四周</td><td class="week w5" colspan="2">5th Week 第五周</td>${out}</tr>`,
  `<tr class="r3"><th>3</th><td class="hd" rowspan="2"><span>Name of Staff</span><span class="cjk">员工姓名</span></td><td class="hd" rowspan="2"><span>Employee ID</span><span class="thin">员工号</span></td><td class="hd" rowspan="2"><span>Position</span><span class="thin">职位</span></td><td class="hd" rowspan="2"><span>Contact No.</span><span class="thin">联系方式</span></td><td class="hd" rowspan="2"><span>Remark</span><span class="cjk">备注</span></td><td class="hd under5" rowspan="3"><span>OT</span><span>小时</span></td><td class="hd frozen under5" rowspan="3"><span>AL</span><span>天数</span></td>${dayCells}${out}</tr>`,
  `<tr class="r4"><th>4</th>${dateCells}${out}</tr>`,
  `<tr class="r5"><th>5</th><td class="bold" colspan="4">KWEAP-HI Rooms Forecast</td><td></td>${forecast.map(f => `<td class="date">${f}</td>`).join("")}<td class="out faint"></td><td class="out"></td></tr>`
];
for (let n = 6; n <= 19; n++) {
  if (n === 7) rows.push(band(7, "GSM (KWEAP)", "band"));
  else if (n === 12) rows.push(band(12, "Front Desk (KWEAP）", "band"));
  else rows.push(staffRow(n));
}
rows.push(band(20, "", "r20"));
rows.push(`<tr class="r21"><th></th><td class="remarks" colspan="38"><p class="red">Shift Remark （ KWEAP):</p><p>07003-A (07:00  —  03:30   )     14301-B (03:30  —  23:00   )     33003-C (11:00  —  07:30   )     07007-D (07:00  —  07:00   )     10003-E (07:00  —  07:00   )     11007-F (11:00  —  00:00   )     33003-G (00:00  —  06:00   )   13000-H(13:00  —  21:00   )</p></td>${out}</tr>`);

document.getElementById("grid").innerHTML =
  `<colgroup>${widths.map(w => `<col style="width:${w}px">`).join("")}<col></colgroup>` +
  `<thead><tr><th class="corner"></th>${letters.map(l => `<th${l === "G" ? ' class="frozen"' : ""}>${l}</th>`).join("")}</tr></thead>` +
  `<tbody>${rows.join("")}</tbody>`;
```
